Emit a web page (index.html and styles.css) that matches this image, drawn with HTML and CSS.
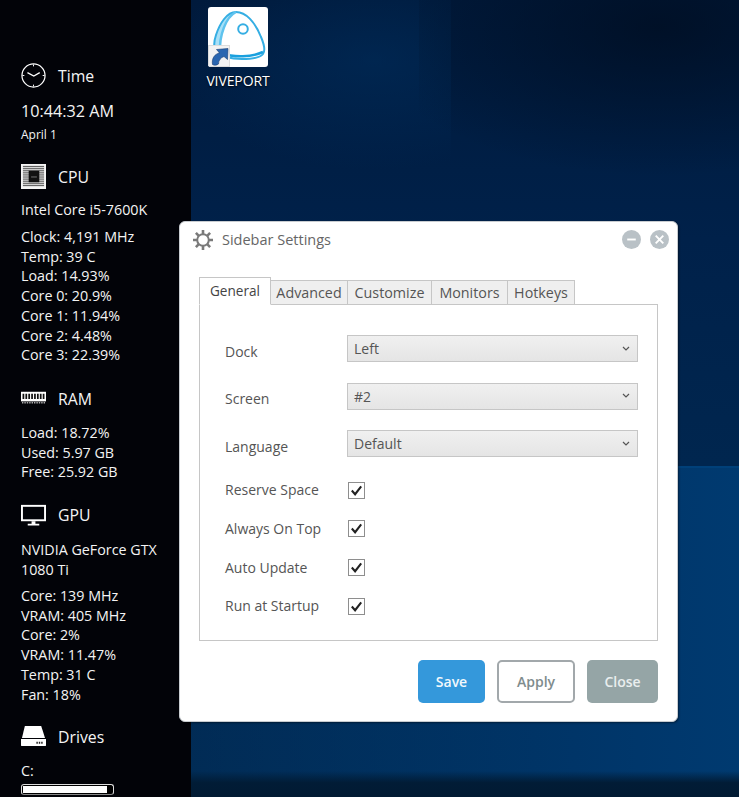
FILE: index.html
```html
<!DOCTYPE html>
<html lang="en">
<head>
<meta charset="utf-8">
<title>Sidebar Settings</title>
<link rel="stylesheet" href="styles.css">
</head>
<body>
<div class="screen">
  <aside class="sidebar">
    <section class="monitor monitor-time">
      <h2 class="head">
        <svg class="ico" viewBox="0 0 26 26"><circle cx="13" cy="13" r="12" fill="none" stroke="#fff" stroke-width="1.300"/><path d="M6.700 10L13.300 13.500L19.500 10" fill="none" stroke="#fff" stroke-width="1.300"/><path d="M13 1.500v2M13 22.500v2M1.500 13h2M22.500 13h2" stroke="#fff" stroke-width="1"/></svg>
        <span>Time</span>
      </h2>
      <div class="clock">10:44:32 AM</div>
      <div class="date">April 1</div>
    </section>
    <section class="monitor monitor-cpu">
      <h2 class="head">
        <svg class="ico" viewBox="0 0 26 26"><rect width="26" height="26" fill="#f4f4f4"/><path d="M2 2.500h22M2 4.500h22M2 6.500h22M2 8.500h22M2 10.500h22M2 12.500h22M2 14.500h22M2 16.500h22M2 18.500h22M2 20.500h22M2 22.500h22" stroke="#4a4a4a" stroke-width="1"/><rect x="8" y="7" width="11" height="12" fill="#111"/><path d="M10.500 13.500h6" stroke="#777" stroke-width="1"/></svg>
        <span>CPU</span>
      </h2>
      <div class="name">Intel Core i5-7600K</div>
      <div class="stat">Clock: 4,191 MHz</div>
      <div class="stat">Temp: 39 C</div>
      <div class="stat">Load: 14.93%</div>
      <div class="stat">Core 0: 20.9%</div>
      <div class="stat">Core 1: 11.94%</div>
      <div class="stat">Core 2: 4.48%</div>
      <div class="stat">Core 3: 22.39%</div>
    </section>
    <section class="monitor monitor-ram">
      <h2 class="head">
        <svg class="ico" viewBox="0 0 26 26"><path d="M0 6h26v10H0z" fill="#fff"/><path d="M2.500 8v5.500M5.500 8v5.500M8.500 8v5.500M11.500 8v5.500M14.500 8v5.500M17.500 8v5.500M20.500 8v5.500M23.500 8v5.500" stroke="#111" stroke-width="1.800"/><path d="M1 17.500h24" stroke="#aaa" stroke-width="1.500" stroke-dasharray="1.500 1"/></svg>
        <span>RAM</span>
      </h2>
      <div class="stat">Load: 18.72%</div>
      <div class="stat">Used: 5.97 GB</div>
      <div class="stat">Free: 25.92 GB</div>
    </section>
    <section class="monitor monitor-gpu">
      <h2 class="head">
        <svg class="ico" viewBox="0 0 26 26"><rect x="1" y="4" width="24" height="15" fill="none" stroke="#fff" stroke-width="2"/><path d="M11 20h4v3h-4zM7 22.500h12V24.500H7z" fill="#fff"/></svg>
        <span>GPU</span>
      </h2>
      <div class="name name-wrap">NVIDIA GeForce GTX 1080 Ti</div>
      <div class="stat">Core: 139 MHz</div>
      <div class="stat">VRAM: 405 MHz</div>
      <div class="stat">Core: 2%</div>
      <div class="stat">VRAM: 11.47%</div>
      <div class="stat">Temp: 31 C</div>
      <div class="stat">Fan: 18%</div>
    </section>
    <section class="monitor monitor-drives">
      <h2 class="head">
        <svg class="ico" viewBox="0 0 26 26"><path d="M4 2h17l4 12.500H1z" fill="#fff"/><path d="M0 15.500h26v6.500a1 1 0 0 1-1 1H1a1 1 0 0 1-1-1z" fill="#fff"/><path d="M16 19.500h1.500M18.500 19.500H20M21 19.500h1.500" stroke="#222" stroke-width="2"/></svg>
        <span>Drives</span>
      </h2>
      <div class="stat">C:</div>
      <div class="bar"><div class="bar-fill" style="width:94%"></div></div>
    </section>
  </aside>

  <main class="desktop">
    <div class="wave"></div>
    <div class="glow"></div>
    <div class="shade"></div>
    <div class="floor"></div>
    <div class="shortcut">
      <div class="shortcut-icon">
        <svg class="logo" viewBox="0 0 60 60">
          <path d="M28 5C19 5 12 16 8 28C6 34 5 41 9 45L12 47C11 28 18 10 28 5Z" fill="#a8e0f7"/>
          <path d="M28 5C38 5 47 15 53 30C56 37 58 43 55 47C52 51 44 52 34 52C24 52 14 50 9 45C5 41 6 34 8 28C12 16 19 5 28 5Z" fill="none" stroke="#35aee3" stroke-width="2"/>
          <path d="M28 5C18 10 11 28 12 46" fill="none" stroke="#5fc3ee" stroke-width="2.500"/>
          <path d="M14 46C26 51 44 50 55 45" fill="none" stroke="#1aa0de" stroke-width="2.500"/>
          <circle cx="35" cy="22" r="4.800" fill="none" stroke="#35aee3" stroke-width="2"/>
        </svg>
        <div class="arrow-badge">
          <svg class="arrow" viewBox="0 0 20 20"><path d="M3.500 18.500C2.500 12.500 5.500 8 10.500 7L7.500 3.500L19 2.500L18.500 13.500L15 10.500C12 11.500 9.500 14 9.500 18C7.500 19.500 5 19.500 3.500 18.500Z" fill="#2a66b0" stroke="#153a70" stroke-width=".6"/></svg>
        </div>
      </div>
      <div class="shortcut-label">VIVEPORT</div>
    </div>

    <div class="dialog">
      <header class="titlebar">
        <svg class="gear" viewBox="0 0 22 22"><circle cx="11" cy="11" r="5.800" fill="none" stroke="#7a7a7a" stroke-width="2"/><path d="M11 1v4M11 17v4M1 11h4M17 11h4M3.900 3.900l2.900 2.900M15.200 15.200l2.900 2.900M3.900 18.100l2.900-2.900M15.200 6.800l2.900-2.900" stroke="#7a7a7a" stroke-width="2.600"/></svg>
        <span class="title">Sidebar Settings</span>
        <div class="win-btns">
          <span class="win-btn"><svg viewBox="0 0 20 20"><path d="M5.500 10h9" stroke="#fff" stroke-width="2"/></svg></span>
          <span class="win-btn"><svg viewBox="0 0 20 20"><path d="M6 6l8 8M14 6l-8 8" stroke="#fff" stroke-width="2"/></svg></span>
        </div>
      </header>
      <div class="tabs">
        <span class="tab tab-active">General</span>
        <span class="tab tab-advanced">Advanced</span>
        <span class="tab tab-customize">Customize</span>
        <span class="tab tab-monitors">Monitors</span>
        <span class="tab tab-hotkeys">Hotkeys</span>
      </div>
      <div class="panel">
        <div class="form">
          <label class="lbl">Dock</label>
          <div class="select"><span>Left</span><svg class="chev" viewBox="0 0 8 6"><path d="M1 1l3 3 3-3" fill="none" stroke="#555" stroke-width="1.200"/></svg></div>
          <label class="lbl">Screen</label>
          <div class="select"><span>#2</span><svg class="chev" viewBox="0 0 8 6"><path d="M1 1l3 3 3-3" fill="none" stroke="#555" stroke-width="1.200"/></svg></div>
          <label class="lbl">Language</label>
          <div class="select"><span>Default</span><svg class="chev" viewBox="0 0 8 6"><path d="M1 1l3 3 3-3" fill="none" stroke="#555" stroke-width="1.200"/></svg></div>
        </div>
        <div class="checks">
          <label class="lbl">Reserve Space</label>
          <span class="check"><svg viewBox="0 0 16 16"><path d="M3 8l3.500 4L13 3.500" fill="none" stroke="#222" stroke-width="2.200"/></svg></span>
          <label class="lbl">Always On Top</label>
          <span class="check"><svg viewBox="0 0 16 16"><path d="M3 8l3.500 4L13 3.500" fill="none" stroke="#222" stroke-width="2.200"/></svg></span>
          <label class="lbl">Auto Update</label>
          <span class="check"><svg viewBox="0 0 16 16"><path d="M3 8l3.500 4L13 3.500" fill="none" stroke="#222" stroke-width="2.200"/></svg></span>
          <label class="lbl">Run at Startup</label>
          <span class="check"><svg viewBox="0 0 16 16"><path d="M3 8l3.500 4L13 3.500" fill="none" stroke="#222" stroke-width="2.200"/></svg></span>
        </div>
      </div>
      <footer class="actions">
        <button class="btn btn-save">Save</button>
        <button class="btn btn-apply">Apply</button>
        <button class="btn btn-close">Close</button>
      </footer>
    </div>
  </main>
</div>
</body>
</html>
```
FILE: styles.css
```css
* { box-sizing: border-box; }
html, body { margin: 0; padding: 0; height: 100%; overflow: hidden; }
body { font-family: "Open Sans", "Noto Sans", sans-serif; }
.screen { display: flex; width: 739px; height: 797px; overflow: hidden; }

.sidebar { width: 191px; flex: none; background: #020308; color: #f4f4f4; padding: 63px 20px 0 21px; overflow: hidden; font-size: 14.300px; }
.monitor-cpu { margin-top: 19px; }
.monitor-ram { margin-top: 21px; }
.monitor-gpu { margin-top: 20px; }
.monitor-drives { margin-top: 20px; }
.head { display: flex; align-items: flex-start; gap: 12px; margin: 0 0 10px; height: 26px; font-size: 15.800px; line-height: 26.500px; font-weight: 400; }
.monitor-ram .head, .monitor-drives .head { margin-bottom: 11px; }
.monitor-gpu .head { margin-bottom: 12px; }
.ico { width: 25px; height: 25px; flex: none; }
.clock { font-size: 16.200px; line-height: 24px; margin-top: 2px; }
.date { font-size: 12px; line-height: 20px; margin-top: 2px; }
.name { line-height: 20px; margin-bottom: 7px; }
.name-wrap { width: 150px; margin-bottom: 6px; }
.stat { line-height: 19.700px; white-space: nowrap; }
.bar { height: 11px; margin-top: 3px; width: 93px; border: 1px solid #ddd; border-bottom-color: #888; border-radius: 3px; background: #000; padding: 1px; }
.bar-fill { height: 100%; background: #fff; }

.desktop { position: relative; flex: 1; background: linear-gradient(180deg, #001a3c 0%, #00214a 30%, #00264f 58%, #01294f 100%); padding: 7px 0 0 17px; }
.wave { position: absolute; left: 0; right: 0; top: 466px; bottom: 14px; background: linear-gradient(90deg, rgba(0,50,100,.3) 0%, #003568 70%, #003a70 100%); border-top: 2px solid #004079; }
.glow { position: absolute; left: 0; top: 0; width: 260px; height: 200px; background: radial-gradient(ellipse 200px 110px at 70% 30%, rgba(0,50,100,.45), transparent); }
.shade { position: absolute; right: 0; top: 0; width: 320px; height: 180px; background: radial-gradient(ellipse 300px 150px at 75% 15%, rgba(0,12,30,.7), transparent); }
.floor { position: absolute; left: 0; right: 0; bottom: 0; height: 26px; background: linear-gradient(180deg, rgba(1,28,54,0) 0%, #011c36 45%, #011a33 100%); }

.shortcut { position: relative; width: 60px; display: flex; flex-direction: column; align-items: center; }
.shortcut-icon { position: relative; width: 60px; height: 60px; background: #fff; border-radius: 3px; overflow: hidden; }
.logo { display: block; width: 60px; height: 60px; }
.arrow-badge { position: absolute; left: 0; bottom: 0; width: 22px; height: 22px; background: #f3f3f3; border: 1px solid #dcdcdc; }
.arrow { display: block; width: 20px; height: 20px; }
.shortcut-label { color: #fff; font-size: 14px; line-height: 20px; margin-top: 4px; white-space: nowrap; text-shadow: 0 1px 2px #000; letter-spacing: -.1px; }

.dialog { position: absolute; z-index: 2; left: -12px; top: 221px; width: 499px; height: 501px; background: #fff; border: 1px solid #c8ccd0; border-radius: 6px; padding: 0 19px; box-shadow: 1px 1px 2px rgba(0,0,0,.4); color: #555; font-size: 14px; display: flex; flex-direction: column; }
.titlebar { display: flex; align-items: center; height: 35px; margin: 0 -11px 0 -7px; flex: none; }
.gear { width: 22px; height: 22px; flex: none; }
.title { margin-left: 8px; font-size: 14.500px; color: #666; }
.win-btns { margin-left: auto; display: flex; gap: 9px; }
.win-btn { width: 19px; height: 19px; border-radius: 50%; background: #b9c1c6; display: block; }
.win-btn svg { display: block; width: 19px; height: 19px; }

.tabs { display: flex; align-items: flex-end; height: 28px; margin-top: 20px; flex: none; position: relative; z-index: 1; margin-bottom: -1px; }
.tab { height: 25px; line-height: 24px; text-align: center; background: #efefef; border: 1px solid #c6c6c6; border-left: 0; color: #555; font-size: 14.300px; white-space: nowrap; }
.tab-advanced { width: 77px; }
.tab-customize { width: 84px; }
.tab-monitors { width: 76px; }
.tab-hotkeys { width: 67px; }
.tab-active { width: 72px; height: 28px; line-height: 26px; background: #fff; border: 1px solid #c6c6c6; border-bottom: 1px solid #fff; color: #444; font-size: 13.600px; }

.panel { height: 337px; border: 1px solid #c6c6c6; padding: 30px 19px 0 25px; flex: none; }
.lbl { color: #555; font-size: 14px; line-height: 20px; white-space: nowrap; }
.form { display: grid; grid-template-columns: 122px 1fr; row-gap: 20.500px; align-items: center; }
.form .lbl { position: relative; top: 3.400px; }
.select { height: 27px; display: flex; align-items: center; justify-content: space-between; padding: 0 7px 0 6px; background: linear-gradient(180deg, #f0f0f0, #e5e5e5); border: 1px solid #c6c6c6; color: #555; font-size: 14px; }
.chev { width: 8px; height: 6px; }
.checks { display: grid; grid-template-columns: 123px 17px; row-gap: 18.800px; margin-top: 23px; align-items: center; }
.check { width: 17px; height: 17px; border: 1px solid #8e8e8e; display: block; background: #fff; }
.check svg { display: block; width: 15px; height: 15px; }

.actions { display: flex; justify-content: flex-end; gap: 12px; margin-top: 19px; flex: none; }
.btn { height: 43px; border-radius: 5px; font-family: inherit; font-size: 14px; font-weight: 600; border: 0; padding: 0; }
.btn-save { width: 67px; background: #3498db; color: #f2f8fc; }
.btn-apply { width: 78px; background: #fff; color: #7f8c8d; border: 2px solid #a2a8ab; }
.btn-close { width: 71px; background: #95a5a6; color: #e9eeee; }
```
